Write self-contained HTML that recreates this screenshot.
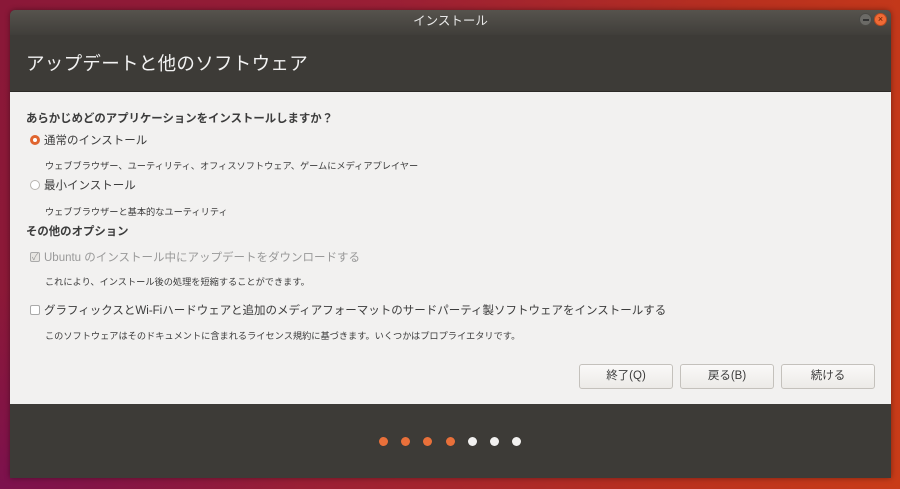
<!DOCTYPE html>
<html><head><meta charset="utf-8"><style>
*{margin:0;padding:0;box-sizing:border-box}
body{width:900px;height:489px;overflow:hidden;position:relative;font-family:"Liberation Sans","Noto Sans CJK JP",sans-serif;
background:linear-gradient(100deg,#8a1838 0%,#9a1f35 40%,#b8301f 75%,#c93c18 100%);}
.bgl{position:absolute;left:0;top:0;width:900px;height:489px;background:radial-gradient(ellipse 300px 200px at 0% 100%,rgba(122,16,80,.9),rgba(122,16,80,0))}
.win{position:absolute;left:10px;top:10px;width:881px;height:468px;background:#3d3b37;border-radius:5px 5px 0 0;overflow:hidden;box-shadow:0 0 6px rgba(0,0,0,.4)}
.tb{height:25px;background:linear-gradient(#56534d,#403e3a);color:#e8e8e8;font-size:12.5px;text-align:center;line-height:22px}
.btnc{position:absolute;top:3px;width:13px;height:13px;border-radius:50%}
.h1{position:absolute;left:16px;top:40px;color:#f2f2f2;font-size:18.5px;letter-spacing:0.3px}
.ct{position:absolute;left:0;top:81px;width:881px;height:313px;background:#f2f1f0;border-top:1px solid #2c2a27;color:#3c3c3c}
.t{position:absolute;white-space:nowrap}
.b{font-weight:bold;font-size:11.4px}
.m{font-size:11.5px}
.s{font-size:9.2px}
.rad{position:absolute;width:10px;height:10px;border-radius:50%;border:1px solid #b8b5b0;background:#fff}
.chk{position:absolute;width:10px;height:10px;border-radius:2px;border:1px solid #aaa;background:#fff}
.bt{position:absolute;top:272px;width:94px;height:25px;border:1px solid #c4c1bc;border-radius:3px;background:linear-gradient(#faf9f8,#eceae7);font-size:11.5px;text-align:center;line-height:23px;color:#3c3c3c}
.dot{position:absolute;top:437px;width:9px;height:9px;border-radius:50%}
</style></head><body>
<div class="bgl"></div>
<div class="win">
<div class="tb">インストール</div>
<div class="btnc" style="left:849px;background:#6b6a66;border:1px solid #4a4945"><div style="position:absolute;left:3px;top:5px;width:6px;height:1.5px;background:#333"></div></div>
<div class="btnc" style="left:864px;background:#f06a35;border:1px solid #b84a20;color:#5a1a00;font-size:9px;line-height:11px;text-align:center">×</div>
<div class="h1">アップデートと他のソフトウェア</div>
<div class="ct">
<div class="t b" style="left:16px;top:18px">あらかじめどのアプリケーションをインストールしますか？</div>
<div class="rad" style="left:20px;top:43px;border:3px solid #e0652f"></div>
<div class="t m" style="left:34px;top:40px">通常のインストール</div>
<div class="t s" style="left:35px;top:66px">ウェブブラウザー、ユーティリティ、オフィスソフトウェア、ゲームにメディアプレイヤー</div>
<div class="rad" style="left:20px;top:88px"></div>
<div class="t m" style="left:34px;top:85px">最小インストール</div>
<div class="t s" style="left:35px;top:112px">ウェブブラウザーと基本的なユーティリティ</div>
<div class="t b" style="left:16px;top:131px">その他のオプション</div>
<div class="chk" style="left:20px;top:160px;background:#e8e6e3;color:#999;font-size:9px;line-height:8px;text-align:center">✓</div>
<div class="t m" style="left:34px;top:157px;color:#999">Ubuntu のインストール中にアップデートをダウンロードする</div>
<div class="t s" style="left:35px;top:182px">これにより、インストール後の処理を短縮することができます。</div>
<div class="chk" style="left:20px;top:213px"></div>
<div class="t m" style="left:34px;top:210px">グラフィックスとWi-Fiハードウェアと追加のメディアフォーマットのサードパーティ製ソフトウェアをインストールする</div>
<div class="t s" style="left:35px;top:236px">このソフトウェアはそのドキュメントに含まれるライセンス規約に基づきます。いくつかはプロプライエタリです。</div>
<div class="bt" style="left:569px">終了(Q)</div>
<div class="bt" style="left:670px">戻る(B)</div>
<div class="bt" style="left:771px">続ける</div>
</div>
</div>
<div class="dot" style="left:379px;background:#e9703a"></div>
<div class="dot" style="left:401px;background:#e9703a"></div>
<div class="dot" style="left:423px;background:#e9703a"></div>
<div class="dot" style="left:446px;background:#e9703a"></div>
<div class="dot" style="left:468px;background:#f2f1f0"></div>
<div class="dot" style="left:490px;background:#f2f1f0"></div>
<div class="dot" style="left:512px;background:#f2f1f0"></div>
</body></html>
